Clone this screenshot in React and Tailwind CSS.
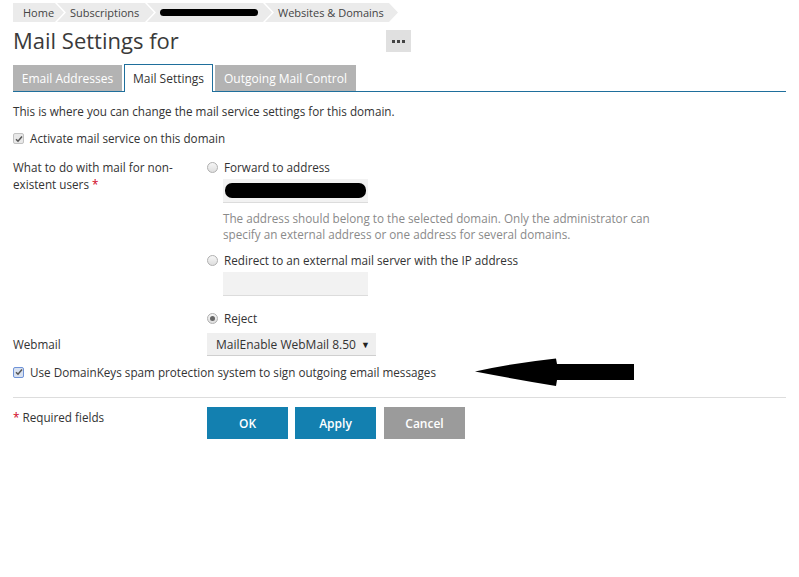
const Crumb = ({ children, first, className = "" }) => (
  <div
    className={`flex items-center h-[19px] bg-[#ebebeb] ${first ? "pl-[10px] [clip-path:polygon(0_0,calc(100%-9px)_0,100%_50%,calc(100%-9px)_100%,0_100%)]" : "pl-[13px] -ml-[7px] [clip-path:polygon(0_0,calc(100%-9px)_0,100%_50%,calc(100%-9px)_100%,0_100%,9px_50%)]"} pr-[14px] ${className}`}
  >
    {children}
  </div>
);

const Check = ({ blue }) => (
  <span
    className={`inline-flex items-center justify-center w-[11px] h-[11px] border rounded-[2px] ${blue ? "border-[#6f93d8] bg-[#d8e1f0]" : "border-[#c2c2c2] bg-[#e8e8e8]"}`}
  >
    <svg width="8" height="8" viewBox="0 0 8 8">
      <path d="M1 4.2 L3 6.2 L7 1.5" fill="none" stroke="#555" strokeWidth="1.5" />
    </svg>
  </span>
);

const Radio = ({ checked }) => (
  <span className="inline-flex items-center justify-center w-[11px] h-[11px] rounded-full border border-[#b0b0b0] bg-gradient-to-b from-[#f6f6f6] to-[#dedede]">
    {checked && <span className="w-[5px] h-[5px] rounded-full bg-[#666]" />}
  </span>
);

export default function App() {
  return (
    <div className="min-h-screen bg-white text-[#333] text-[11.7px] leading-[17px] px-[13px] font-['Open_Sans','Noto_Sans',sans-serif]">
      {/* breadcrumbs */}
      <div className="flex pt-[3px] text-[11px] text-[#444]">
        <Crumb first className="w-[51px]">Home</Crumb>
        <Crumb className="w-[97px]">Subscriptions</Crumb>
        <Crumb className="w-[125px]">
          <div className="w-[108px] h-[7px] bg-black rounded-full" />
        </Crumb>
        <Crumb className="w-[133px]">Websites &amp; Domains</Crumb>
      </div>

      {/* title */}
      <div className="flex items-center mt-[4px] h-[28px]">
        <h1 className="w-[373px] text-[22px] leading-[28px] text-[#3a3a3a]">Mail Settings for</h1>
        <button className="w-[25px] h-[22px] bg-[#e0e0e0] flex items-center justify-center gap-[2px] mt-[2px]">
          <span className="w-[3px] h-[3px] bg-[#444]" />
          <span className="w-[3px] h-[3px] bg-[#444]" />
          <span className="w-[3px] h-[3px] bg-[#444]" />
        </button>
      </div>

      {/* tabs */}
      <div className="flex items-end gap-[2px] mt-[10px] border-b border-[#1f6f9c] w-[773px] text-[12px]">
        <div className="w-[109px] h-[26px] bg-[#b3b3b3] text-white flex items-center justify-center">Email Addresses</div>
        <div className="w-[89px] h-[28px] bg-white border border-b-0 border-[#1f6f9c] -mb-px flex items-center justify-center text-[#333]">
          Mail Settings
        </div>
        <div className="w-[141px] h-[26px] bg-[#b3b3b3] text-white flex items-center justify-center">Outgoing Mail Control</div>
      </div>

      <p className="mt-[11px]">This is where you can change the mail service settings for this domain.</p>

      <label className="flex items-center gap-[6px] mt-[10px]">
        <Check />
        <span>Activate mail service on this domain</span>
      </label>

      <div className="grid grid-cols-[194px_1fr] mt-[12px]">
        <div>
          What to do with mail for non-
          <br />
          existent users <span className="text-[#d0021b]">*</span>
        </div>
        <div>
          <label className="flex items-center gap-[6px]">
            <Radio />
            <span>Forward to address</span>
          </label>
          <div className="ml-[16px] mt-[3px] w-[145px] h-[24px] bg-[#f2f2f2] border-b border-[#dcdcdc] flex items-center pl-[2px]">
            <div className="w-[141px] h-[15px] bg-black rounded-[7px]" />
          </div>
          <p className="ml-[16px] mt-[7px] leading-[16px] text-[#8a8a8a] w-[445px]">
            The address should belong to the selected domain. Only the administrator can specify an external address or one address for several domains.
          </p>
          <label className="flex items-center gap-[6px] mt-[10px]">
            <Radio />
            <span>Redirect to an external mail server with the IP address</span>
          </label>
          <div className="ml-[16px] mt-[3px] w-[145px] h-[24px] bg-[#f2f2f2] border-b border-[#dcdcdc]" />
          <label className="flex items-center gap-[6px] mt-[14px]">
            <Radio checked />
            <span>Reject</span>
          </label>
        </div>
      </div>

      <div className="grid grid-cols-[194px_1fr] items-center mt-[6px]">
        <div>Webmail</div>
        <div className="w-[169px] h-[23px] bg-[#efefef] border-b border-[#cfcfcf] flex items-center justify-between pl-[9px] pr-[6px] text-[12px]">
          <span>MailEnable WebMail 8.50</span>
          <span className="text-[9px] text-[#222]">▼</span>
        </div>
      </div>

      <div className="flex items-center mt-[2px] h-[28px]">
        <label className="flex items-center gap-[6px]">
          <Check blue />
          <span>Use DomainKeys spam protection system to sign outgoing email messages</span>
        </label>
        <svg className="ml-[38px]" width="162" height="29" viewBox="0 0 162 29">
          <path d="M1 13.5 Q40 5 82 0.5 L83 6 L160 6 L160 22 L83 22 L82 28 Q40 21 1 13.5 Z" fill="#000" />
        </svg>
      </div>

      <div className="mt-[11px] w-[773px] border-t border-[#dddddd]" />

      <div className="grid grid-cols-[194px_1fr] mt-[9px]">
        <div className="pt-[2px]">
          <span className="text-[#d0021b]">*</span> Required fields
        </div>
        <div className="flex text-[12px]">
          <button className="w-[81px] h-[32px] bg-[#1380b0] text-white font-semibold">OK</button>
          <button className="ml-[7px] w-[81px] h-[32px] bg-[#1380b0] text-white font-semibold">Apply</button>
          <button className="ml-[8px] w-[81px] h-[32px] bg-[#9b9b9b] text-white font-semibold">Cancel</button>
        </div>
      </div>
    </div>
  );
}
